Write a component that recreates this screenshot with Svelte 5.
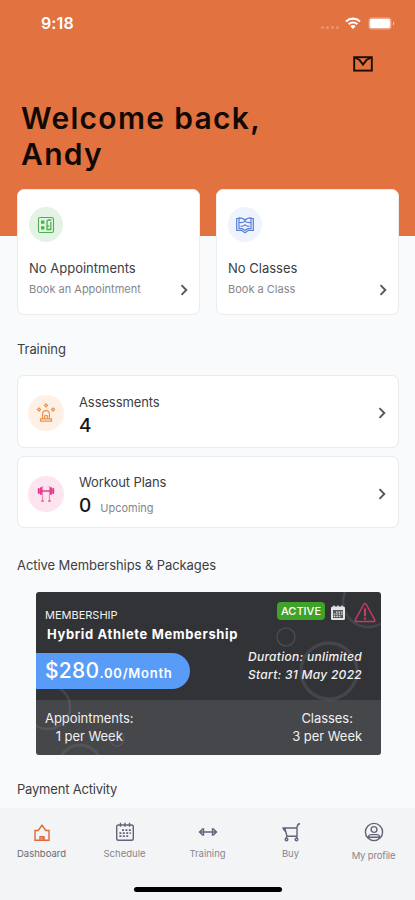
<script>
  const summary = [
    { icon: "appointments", title: "No Appointments", action: "Book an Appointment" },
    { icon: "classes", title: "No Classes", action: "Book a Class" },
  ];

  const training = [
    { icon: "assessments", title: "Assessments", count: 4, note: "" },
    { icon: "workouts", title: "Workout Plans", count: 0, note: "Upcoming" },
  ];

  const tabs = [
    { icon: "home", label: "Dashboard" },
    { icon: "calendar", label: "Schedule" },
    { icon: "training", label: "Training" },
    { icon: "cart", label: "Buy" },
    { icon: "profile", label: "My profile" },
  ];

  let active = $state("home");
</script>

{#snippet chevron()}
  <svg class="chevron" width="8" height="12" viewBox="0 0 8 12">
    <path d="M1.5 1.2 6.3 6 1.5 10.8" />
  </svg>
{/snippet}

<div class="screen">
  <header>
    <div class="status">
      <span class="time">9:18</span>
      <span class="signal"><i></i><i></i><i></i><i></i></span>
      <svg class="wifi" width="16" height="12" viewBox="0 0 16 12">
        <path d="M1 4.4a10.2 10.2 0 0 1 14 0M3.6 7.2a6.5 6.5 0 0 1 8.8 0" fill="none" stroke="#fff" stroke-width="2.1" />
        <path d="M8 12 5.3 9.3a3.9 3.9 0 0 1 5.4 0z" fill="#fff" />
      </svg>
      <svg class="battery" width="27" height="13" viewBox="0 0 27 13">
        <rect x=".5" y=".5" width="23" height="12" rx="3.5" fill="#fff" opacity=".4" />
        <rect x="2" y="2" width="20" height="9" rx="1.5" fill="#fff" />
        <path d="M25 4.5v4c1.6-.6 1.6-3.4 0-4z" fill="#fff" opacity=".6" />
      </svg>
    </div>
    <div class="inbox">
      <svg width="20" height="16" viewBox="0 0 20 16">
        <rect x="1.2" y="1.2" width="17.6" height="13.4" fill="none" stroke="#1c0d06" stroke-width="1.9" />
        <path d="M2 1.5 6.5 4 10 8.6 13.5 4 18 1.5" fill="none" stroke="#1c0d06" stroke-width="2" />
      </svg>
    </div>
    <h1>Welcome back,<br />Andy</h1>
  </header>

  <main>
    <div class="summary">
      {#each summary as item}
        <article class="tile">
          <div class="bubble {item.icon}">
            {#if item.icon === "appointments"}
              <svg width="18" height="18" viewBox="0 0 18 18" fill="none" stroke="#4fae50">
                <rect x="1.5" y="1.5" width="15" height="15" rx="1.5" stroke-width="1.1" />
                <path d="M4 4.5h3.4v3.3H4zM4 10.2h3.4v3.3H4z" fill="#4fae50" stroke="none" />
                <path d="M14.5 4H12q-2 0-2 2v7.5h3.8V6M10 10h2" stroke-width="1.3" />
              </svg>
            {:else}
              <svg width="20" height="18" viewBox="0 0 20 18" fill="none" stroke="#5a7fd8" stroke-width="1.2">
                <path d="M4 2.5H1.7v11.8h4.8L10 16.8l3.5-2.5h4.8V2.5H16" />
                <path d="M4 1.8c3 0 5 1 6 2.5 1-1.5 3-2.5 6-2.5v10.5c-3 0-5 .8-6 2.2-1-1.4-3-2.2-6-2.2z" />
                <path d="M4 6.5c2.5.2 4.5.3 6-1.2 1.5 1.5 3.5 1.4 6 1.2M5.5 10.4c2 0 3.4-.2 4.5-1.6 1.1 1.4 2.5 1.6 4.5 1.6" />
              </svg>
            {/if}
          </div>
          <h3>{item.title}</h3>
          <div class="tile-action">
            <span>{item.action}</span>
            {@render chevron()}
          </div>
        </article>
      {/each}
    </div>

    <h2 class="training-title">Training</h2>
    {#each training as item}
      <article class="row {item.icon}-row">
        <div class="bubble large {item.icon}">
          {#if item.icon === "assessments"}
            <svg width="20" height="20" viewBox="0 0 20 20" fill="none" stroke="#ef914e" stroke-width="1.2">
              <path d="M6.6 15.5V11a3.4 3.4 0 0 1 6.8 0v4.5M4.5 18.2v-2.4h11v2.4zM8.5 15.5l.4-3h2.2l.4 3" />
              <path d="m10 .8 1.6 1.6L10 4 8.4 2.4zM3 5l1.6 1.6L3 8.2 1.4 6.6zM17 5l1.6 1.6L17 8.2l-1.6-1.6z" />
            </svg>
          {:else}
            <svg width="18" height="18" viewBox="0 0 18 18" fill="none" stroke="#e6348b">
              <path d="M4.5 6h9" stroke-width="1.4" />
              <path d="M1.8 4v4M16.2 4v4" stroke-width="2" stroke-linecap="round" />
              <path d="M4 3v6M14 3v6" stroke-width="1.9" stroke-linecap="round" />
              <path d="M5.6 1v15M12.4 1v15" stroke-width="1" opacity=".6" />
              <path d="M4.2 16h2.6M11.2 16h2.6" stroke-width="1.3" opacity=".8" />
            </svg>
          {/if}
        </div>
        <div class="row-text">
          <h3>{item.title}</h3>
          <p>
            <strong>{item.count}</strong>
            {#if item.note}<span>{item.note}</span>{/if}
          </p>
        </div>
        {@render chevron()}
      </article>
    {/each}

    <h2 class="packages-title">Active Memberships &amp; Packages</h2>
    <article class="membership">
      <svg class="rings" width="345" height="163" viewBox="0 0 345 163" fill="none" stroke="#8b9096">
        <circle cx="293" cy="79" r="28" stroke-width="3.5" opacity=".2" />
        <circle cx="250" cy="45" r="9" stroke-width="1.5" opacity=".25" />
        <circle cx="332" cy="10" r="25" stroke-width="2.5" opacity=".2" />
        <circle cx="12" cy="115" r="22" stroke-width="2.5" opacity=".2" />
        <circle cx="44" cy="174" r="21" stroke-width="3" opacity=".2" />
        <circle cx="81" cy="147" r="7" stroke-width="1.5" opacity=".2" />
      </svg>
      <div class="membership-top">
        <div class="plan">
          <span class="kind">MEMBERSHIP</span>
          <span class="name">Hybrid Athlete Membership</span>
          <div class="price"><b>$280</b><span>.00/Month</span></div>
        </div>
        <div class="terms">
          <div class="flags">
            <span class="badge">ACTIVE</span>
            <svg width="16" height="16" viewBox="0 0 16 16">
              <rect x="1" y="1.5" width="14" height="13.5" rx="1.5" fill="#e3e4e5" />
              <path d="M4 .5v3M8 .5v3M12 .5v3" stroke="#e3e4e5" stroke-width="1.4" />
              <path d="M3 5h10v8H3z" fill="#56585c" />
              <path d="M6 7.2h6.5M3.8 9.2h8.7M3.8 11.3h6.5" stroke="#e3e4e5" stroke-width="1.2" stroke-dasharray="1.5 1" />
            </svg>
            <svg class="warning" width="22" height="21" viewBox="0 0 22 21" fill="none" stroke="#c53d62">
              <path d="M11 1.5q.8 0 1.3 1l8.4 15.2q.6 1.8-1 1.8H2.3q-1.6 0-1-1.8L9.7 2.5q.5-1 1.3-1z" stroke-width="1.5" />
              <path d="M11 6.5v7.8M11 15.6v1.8" stroke-width="2.2" />
            </svg>
          </div>
          <em class="duration">Duration: unlimited</em>
          <em class="start">Start: 31 May 2022</em>
        </div>
      </div>
      <div class="allowance">
        <p><span>Appointments:</span><br /><span>1 per Week</span></p>
        <p><span>Classes:</span><br /><span>3 per Week</span></p>
      </div>
    </article>

    <h2 class="payment-title">Payment Activity</h2>
  </main>

  <nav>
    <div class="tabs">
      {#each tabs as tab}
        <button class={tab.icon} class:active={active === tab.icon} onclick={() => (active = tab.icon)}>
          <svg width="20" height="20" viewBox="0 0 20 20">
            {#if tab.icon === "home"}
              <path d="M3 18.3V8.5h3.2L10 3.2l3.8 5.3H17v9.8zM8 18v-3.3h4V18M9.3 16.5h2" />
            {:else if tab.icon === "calendar"}
              <rect x="1.7" y="3" width="16.6" height="15.3" rx="1.8" />
              <path d="M5.5.8v4M10 .8v4M14.5.8v4" />
              <path d="M7 8.2h9M4.4 11.2h11.4M4.4 14.2h9" stroke-dasharray="2 1.4" stroke-width="1.8" />
            {:else if tab.icon === "training"}
              <path d="M1 10h18M5.5 6.3v7.4M14.5 6.3v7.4M5 6.8 1.5 10 5 13.2M15 6.8l3.5 3.2-3.5 3.2" />
            {:else if tab.icon === "cart"}
              <path d="M1.5 6h14.3M3.8 6.2l2.2 8h10V5.5Q16.2 2.2 19 1.5M1.8 6l2.4 3.4M6 14l-1.2 3M15.8 14v3" />
              <circle cx="5.5" cy="17.6" r="1.3" />
              <circle cx="15.5" cy="17.6" r="1.3" />
            {:else}
              <circle cx="10" cy="10" r="8.6" />
              <circle cx="10" cy="7.5" r="2.9" />
              <path d="M4.3 16.3v-1.8Q5 12.6 7.5 12.6h5q2.5 0 3.2 1.9v1.8M5 15.2h10" />
            {/if}
          </svg>
          <span>{tab.label}</span>
        </button>
      {/each}
    </div>
    <div class="home-bar"></div>
  </nav>
</div>

<style>
  :global(body) {
    background: #f9fafc;
  }

  .screen {
    width: 415px;
    height: 900px;
    overflow: hidden;
    display: flex;
    flex-direction: column;
    background: #f9fafc;
    color: #3d3e42;
    font-family: Inter, "Liberation Sans", sans-serif;
  }

  h1,
  h2,
  h3,
  p {
    margin: 0;
    font-weight: 400;
  }

  svg {
    flex: none;
    display: block;
  }

  header {
    flex: none;
    height: 236px;
    background: #e27240;
  }

  .status {
    display: flex;
    align-items: center;
    height: 46px;
    padding: 0 20px 0 41px;
  }

  .time {
    margin-right: auto;
    color: #fff;
    font-size: 16px;
    font-weight: 600;
    letter-spacing: 0.1px;
  }

  .signal {
    display: flex;
    gap: 2px;
    margin: 8px 6px 0 0;
  }

  .signal i {
    width: 3px;
    height: 3px;
    border-radius: 50%;
    background: #fff;
    opacity: 0.25;
  }

  .battery {
    margin-left: 7px;
  }

  .inbox {
    display: flex;
    justify-content: flex-end;
    padding: 10px 42px 0 0;
  }

  h1 {
    padding: 28px 0 0 21px;
    color: #120905;
    font-size: 30px;
    font-weight: 600;
    line-height: 36px;
    letter-spacing: 1.3px;
  }

  main {
    flex: none;
    height: 572px;
    padding: 0 16px 0 17px;
    box-sizing: border-box;
  }

  .summary {
    position: relative;
    display: flex;
    gap: 16px;
    margin-top: -47px;
  }

  .tile {
    flex: 1;
    height: 126px;
    padding: 17px 11px 0;
    box-sizing: border-box;
    background: #fff;
    border: 1px solid #ebecee;
    border-radius: 7px;
  }

  .bubble {
    display: grid;
    place-items: center;
    width: 34px;
    height: 35px;
    flex: none;
    border-radius: 50%;
  }

  .bubble.large {
    width: 36px;
    height: 36px;
    margin-top: 3px;
  }

  .appointments {
    background: #e3f4e4;
  }

  .classes {
    background: #eef3fd;
  }

  .assessments {
    background: #fff0e6;
  }

  .workouts {
    background: #fde5f0;
  }

  h3 {
    font-size: 13px;
    line-height: 18px;
  }

  .tile h3 {
    margin-top: 17px;
  }

  .tile-action {
    display: flex;
    align-items: center;
    justify-content: space-between;
    height: 24px;
    color: #85868c;
    font-size: 11px;
  }

  .tile-action .chevron {
    margin-top: 2px;
  }

  .chevron {
    fill: none;
    stroke: #55555e;
    stroke-width: 1.9;
  }

  h2 {
    font-size: 13px;
    line-height: 18px;
    letter-spacing: -0.08px;
  }

  .training-title {
    margin: 25px 0 17px;
  }

  .row {
    display: flex;
    align-items: center;
    height: 73px;
    margin-bottom: 8px;
    padding: 0 12px 0 10px;
    box-sizing: border-box;
    background: #fff;
    border: 1px solid #e8eaec;
    border-radius: 7px;
  }

  .row .chevron {
    margin-top: 3px;
  }

  .workouts-row {
    height: 72px;
  }

  .row-text {
    flex: 1;
    margin: 6px 0 0 15px;
  }

  .row h3 {
    letter-spacing: -0.1px;
  }

  .row p {
    display: flex;
    align-items: baseline;
    height: 26px;
    line-height: 29px;
  }

  .row strong {
    color: #161616;
    font-size: 19px;
    font-weight: 500;
  }

  .row p span {
    margin-left: 9px;
    color: #85868c;
    font-size: 11px;
  }

  .packages-title {
    margin-top: 28px;
  }

  .membership {
    position: relative;
    height: 163px;
    width: 345px;
    margin: 18px 0 0 19px;
    overflow: hidden;
    background: #323337;
    border-radius: 3px;
    color: #f1f1f2;
  }

  .rings {
    position: absolute;
    inset: 0;
  }

  .membership-top {
    position: relative;
    display: flex;
    justify-content: space-between;
    height: 108px;
  }

  .plan,
  .terms {
    display: flex;
    flex-direction: column;
  }

  .kind {
    margin: 14px 0 0 9px;
    font-size: 11px;
    line-height: 18px;
  }

  .name {
    margin-left: 11px;
    color: #fff;
    font-size: 13px;
    font-weight: 700;
    line-height: 20px;
    letter-spacing: 0.64px;
  }

  .price {
    display: flex;
    align-items: baseline;
    width: 154px;
    height: 36px;
    margin-top: 9px;
    padding-left: 9px;
    box-sizing: border-box;
    background: #589cf7;
    border-radius: 0 18px 18px 0;
    color: #fff;
    line-height: 35px;
    font-size: 13px;
    font-weight: 600;
    letter-spacing: 0.75px;
  }

  .price b {
    font-size: 21px;
    font-weight: 500;
    letter-spacing: 0.3px;
  }

  .terms {
    align-items: flex-end;
  }

  .flags {
    display: flex;
    align-items: center;
    gap: 5px;
    height: 21px;
    margin: 10px 5px 25px 0;
  }

  .flags .warning {
    margin-left: 3px;
  }

  .badge {
    width: 48px;
    height: 18px;
    margin-top: -3px;
    border-radius: 4px;
    background: #41a229;
    color: #fff;
    font-size: 11px;
    font-weight: 500;
    line-height: 18px;
    text-align: center;
  }

  .terms em {
    margin-right: 19px;
    font-size: 12px;
    font-weight: 500;
    line-height: 18px;
    letter-spacing: 0.28px;
  }

  .allowance {
    display: flex;
    justify-content: space-between;
    height: 55px;
    padding: 9px 19px 0 9px;
    box-sizing: border-box;
    background: rgba(255, 255, 255, 0.1);
    font-size: 13px;
    font-weight: 500;
    line-height: 18px;
    letter-spacing: -0.05px;
    text-align: center;
  }

  .payment-title {
    margin-top: 25px;
    letter-spacing: -0.2px;
  }

  nav {
    flex: none;
    height: 92px;
    background: #f3f4f6;
  }

  .tabs {
    display: flex;
    height: 79px;
  }

  button {
    display: flex;
    flex: 1;
    flex-direction: column;
    align-items: center;
    gap: 5px;
    padding: 14px 0 0;
    border: 0;
    background: none;
    color: #85868c;
    font: 9.5px/14px Inter, "Liberation Sans", sans-serif;
  }

  button svg {
    fill: none;
    stroke: #62637a;
    stroke-width: 1.4;
  }

  .active svg {
    stroke: #e0693a;
  }

  .active span {
    color: #6a6b70;
  }

  .profile span {
    margin-top: 2px;
    letter-spacing: -0.15px;
  }

  .home-bar {
    width: 148px;
    height: 5px;
    margin: 0 auto;
    border-radius: 3px;
    background: #000;
  }
</style>
